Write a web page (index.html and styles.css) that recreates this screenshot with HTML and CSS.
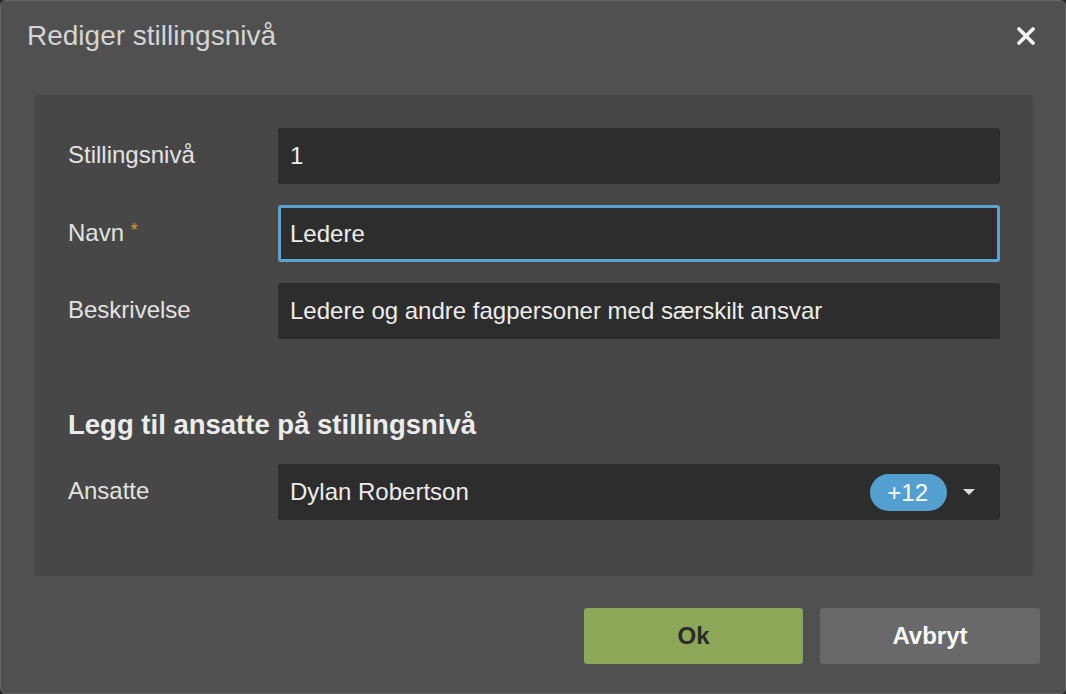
FILE: index.html
```html
<!DOCTYPE html>
<html lang="nb">
<head>
    <meta charset="UTF-8">
    <title>Rediger stillingsnivå</title>
    <link rel="stylesheet" href="styles.css">
</head>
<body>
    <div class="dialog">
        <div class="dialog-header">
            <h1>Rediger stillingsnivå</h1>
            <button class="close-btn" aria-label="Lukk">
                <svg viewBox="0 0 22 22" width="22" height="22">
                    <path d="M4 4 L18 18 M18 4 L4 18" stroke="#f2f2f2" stroke-width="3.8" stroke-linecap="round"></path>
                </svg>
            </button>
        </div>

        <div class="panel">
            <div class="form-row">
                <label>Stillingsnivå</label>
                <div class="field">1</div>
            </div>
            <div class="form-row">
                <label>Navn <span class="required">*</span></label>
                <div class="field focused">Ledere</div>
            </div>
            <div class="form-row">
                <label>Beskrivelse</label>
                <div class="field">Ledere og andre fagpersoner med særskilt ansvar</div>
            </div>

            <h2>Legg til ansatte på stillingsnivå</h2>

            <div class="form-row">
                <label>Ansatte</label>
                <div class="field select">
                    <span class="select-value">Dylan Robertson</span>
                    <span class="badge">+12</span>
                    <span class="caret"></span>
                </div>
            </div>
        </div>

        <div class="dialog-footer">
            <button class="btn btn-ok">Ok</button>
            <button class="btn btn-cancel">Avbryt</button>
        </div>
    </div>
</body>
</html>
```

FILE: styles.css
```css
* {
    margin: 0;
    padding: 0;
    box-sizing: border-box;
}

body {
    font-family: "Liberation Sans", Arial, sans-serif;
    background-color: #2b2b2b;
    color: #e6e6e6;
    height: 100vh;
    overflow: hidden;
}

.dialog {
    height: 694px;
    background: #505050;
    border: 1px solid #666;
    border-radius: 6px;
    display: flex;
    flex-direction: column;
}

/* Header */
.dialog-header {
    display: flex;
    align-items: center;
    justify-content: space-between;
    height: 72px;
    padding: 0 28px 0 26px;
}

h1 {
    font-size: 28px;
    font-weight: normal;
    color: #d4d4d4;
    margin-top: -2px;
}

.close-btn {
    background: none;
    border: none;
    cursor: pointer;
    display: flex;
    margin-top: -2px;
}

/* Form panel */
.panel {
    margin: 22px 32px 0 33px;
    background: #474747;
    border-radius: 3px;
    padding: 33px 33px 56px 34px;
}

.form-row {
    display: flex;
    align-items: center;
    margin-bottom: 21px;
}

.form-row:last-child {
    margin-bottom: 0;
}

.form-row label {
    width: 210px;
    font-size: 24px;
    color: #e2e2e2;
    margin-top: -2px;
}

.required {
    color: #e0963a;
    font-size: 18px;
    vertical-align: 5px;
}

.field {
    flex: 1;
    height: 56px;
    background: #2d2d2d;
    border-radius: 3px;
    padding: 0 12px;
    display: flex;
    align-items: center;
    font-size: 24px;
    color: #ececec;
}

.field.focused {
    height: 57px;
    border: 3px solid #5aa2cf;
    padding: 0 9px;
}

h2 {
    font-size: 27.5px;
    font-weight: bold;
    color: #ececec;
    margin: 70px 0 23px;
}

.select-value {
    flex: 1;
}

.badge {
    background: #539fcf;
    color: #fff;
    border-radius: 19px;
    padding: 0 19px 0 17px;
    height: 37px;
    line-height: 37px;
    font-size: 24px;
    margin-right: 16px;
}

.caret {
    width: 0;
    height: 0;
    border-left: 6px solid transparent;
    border-right: 6px solid transparent;
    border-top: 6px solid #dcdcdc;
    margin-right: 13px;
}

/* Footer */
.dialog-footer {
    display: flex;
    justify-content: flex-end;
    gap: 17px;
    padding: 32px 25px 0 0;
}

.btn {
    width: 220px;
    height: 56px;
    border: none;
    border-radius: 3px;
    font-family: "Liberation Sans", Arial, sans-serif;
    font-size: 24px;
    font-weight: bold;
    cursor: pointer;
}

.btn-ok {
    background: #8ba757;
    color: #2a2a2a;
    width: 219px;
}

.btn-cancel {
    background: #696969;
    color: #fafafa;
}
```
